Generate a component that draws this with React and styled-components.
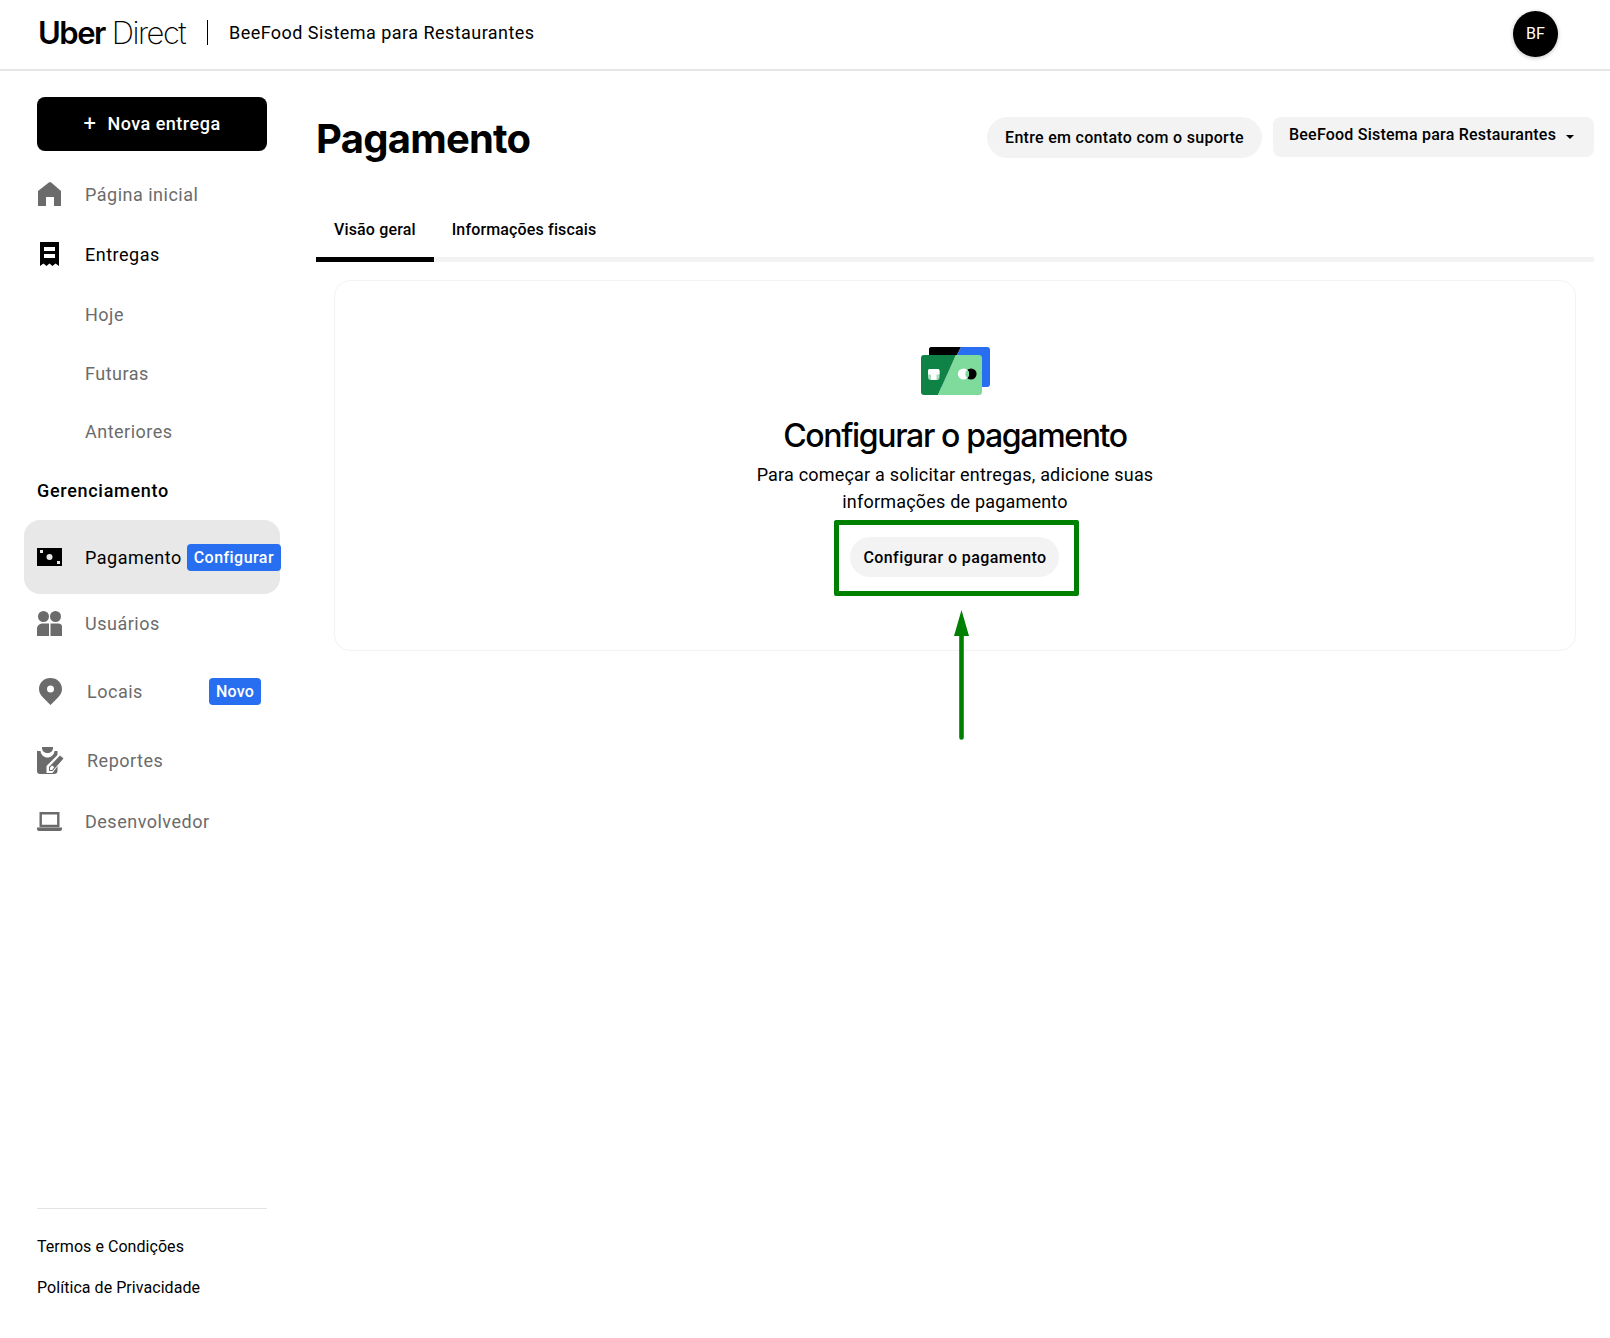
import React from "react";
import styled, { createGlobalStyle } from "styled-components";

const GlobalStyle = createGlobalStyle`
  html, body {
    margin: 0;
    background: #fff;
    color: #000;
    font-family: "Roboto", "Liberation Sans", sans-serif;
  }
  * {
    box-sizing: border-box;
  }
`;

const Page = styled.div`
  width: 1610px;
  height: 1338px;
  display: flex;
  flex-direction: column;
  overflow: hidden;
`;

const Header = styled.header`
  height: 71px;
  flex: none;
  display: flex;
  align-items: center;
  padding: 0 52px 4px 38px;
  border-bottom: 2px solid #e6e6e6;
`;

const Logo = styled.div`
  width: 148px;
  font-family: "Inter", sans-serif;
  font-size: 31px;
  line-height: 34px;
  letter-spacing: -1.5px;
  white-space: nowrap;
`;

const LogoBold = styled.span`
  font-weight: 600;
  margin-right: 7px;
`;

const LogoLight = styled.span`
  font-weight: 200;
`;

const HeaderRule = styled.div`
  width: 1px;
  height: 25px;
  background: #000;
  margin: 0 21px;
`;

const HeaderTitle = styled.div`
  font-size: 18px;
  letter-spacing: 0.45px;
  font-weight: 400;
`;

const Avatar = styled.div`
  margin: 2px 0 0 auto;
  width: 45px;
  height: 46px;
  border-radius: 50%;
  background: #000;
  color: #fff;
  font-size: 16px;
  display: flex;
  align-items: center;
  justify-content: center;
  box-shadow: 0 1px 4px rgba(0, 0, 0, 0.25);
`;

const Body = styled.div`
  flex: 1;
  display: flex;
  min-height: 0;
`;

const Sidebar = styled.aside`
  width: 316px;
  flex: none;
  display: flex;
  flex-direction: column;
  padding: 26px 49px 39px 37px;
`;

const NewButton = styled.button`
  height: 54px;
  flex: none;
  margin-bottom: 13px;
  padding-bottom: 2px;
  border: 0;
  border-radius: 8px;
  background: #000;
  color: #fff;
  font-family: inherit;
  font-size: 18px;
  font-weight: 500;
  letter-spacing: 0.5px;
  display: flex;
  align-items: center;
  justify-content: center;
  gap: 11px;
`;

const Plus = styled.span`
  font-size: 22px;
  font-weight: 400;
  line-height: 1;
`;

const NavItem = styled.div`
  height: ${(p) => p.$h}px;
  flex: none;
  display: flex;
  align-items: center;
  gap: 23px;
  font-size: 18px;
  color: ${(p) => (p.$active ? "#000" : "#6b6b6b")};
  letter-spacing: 0.5px;
`;

const SubItem = styled(NavItem)`
  padding-left: 48px;
`;

const SelectedItem = styled(NavItem)`
  margin: 0 -13px;
  padding-left: 13px;
  background: #e8e8e8;
  border-radius: 16px;
`;

const SectionLabel = styled(NavItem)`
  color: #000;
  font-weight: 500;
  letter-spacing: 0.7px;
`;

const Badge = styled.span`
  height: 27px;
  padding: 0 7px;
  margin-left: ${(p) => p.$ml};
  margin-right: ${(p) => p.$mr};
  flex: none;
  display: flex;
  align-items: center;
  border-radius: 4px;
  background: #276ef1;
  color: #fff;
  font-size: 16px;
  font-weight: 500;
  letter-spacing: ${(p) => p.$ls};
`;

const Footer = styled.div`
  margin-top: auto;
  padding-top: 27px;
  border-top: 1px solid #e2e2e2;
  display: flex;
  flex-direction: column;
  gap: 19px;
  font-size: 16px;
  letter-spacing: 0.05px;
`;

const FooterLink = styled.a`
  line-height: 22px;
  color: #000;
`;

const Main = styled.main`
  flex: 1;
  min-width: 0;
  padding: 46px 16px 0 0;
`;

const TopRow = styled.div`
  display: flex;
  align-items: flex-start;
  gap: 11px;
`;

const PageTitle = styled.h1`
  margin: 0 auto 0 0;
  font-size: 40px;
  line-height: 44px;
  font-weight: 700;
  font-family: "Inter", sans-serif;
  letter-spacing: -0.75px;
`;

const SupportButton = styled.button`
  height: 41px;
  width: 275px;
  border: 0;
  border-radius: 21px;
  background: #f3f3f3;
  color: #000;
  font-family: inherit;
  font-size: 16px;
  font-weight: 500;
  letter-spacing: 0.3px;
`;

const AccountSelect = styled.button`
  width: 321px;
  height: 40px;
  border: 0;
  border-radius: 8px;
  background: #f3f3f3;
  color: #000;
  font-family: inherit;
  font-size: 16px;
  font-weight: 500;
  letter-spacing: 0.22px;
  display: flex;
  align-items: flex-start;
  padding: 8px 0 0 16px;
  gap: 10px;
`;

const Caret = styled.svg`
  width: 8px;
  height: 4px;
  margin-top: 10px;
`;

const Tabs = styled.div`
  margin-top: 56px;
  height: 45px;
  display: flex;
  border-bottom: 5px solid #f3f3f3;
`;

const Tab = styled.div`
  height: 45px;
  padding: 0 18px 16px;
  display: flex;
  align-items: center;
  font-size: 16px;
  font-weight: 500;
  letter-spacing: 0.15px;
  border-bottom: 5px solid ${(p) => (p.$active ? "#000" : "transparent")};
`;

const Card = styled.section`
  position: relative;
  margin: 18px 18px 0;
  height: 371px;
  border: 1px solid #f3f3f3;
  border-radius: 16px;
  padding-top: 66px;
  display: flex;
  flex-direction: column;
  align-items: center;
`;

const CardTitle = styled.h2`
  margin: 19px 0 0;
  font-family: "Inter", sans-serif;
  font-size: 32px;
  line-height: 44px;
  font-weight: 500;
  letter-spacing: -1.35px;
`;

const CardText = styled.p`
  margin: 3px 0 0;
  width: 420px;
  text-align: center;
  font-size: 18px;
  line-height: 27px;
  letter-spacing: 0.2px;
`;

const SetupButton = styled.button`
  margin: 22px 2px 0 0;
  padding-left: 8px;
  width: 209px;
  height: 40px;
  flex: none;
  border: 0;
  border-radius: 20px;
  background: #f3f3f3;
  color: #000;
  font-family: inherit;
  font-size: 16px;
  font-weight: 500;
  letter-spacing: 0.43px;
`;

const Highlight = styled.div`
  position: absolute;
  left: 499px;
  top: 239px;
  width: 245px;
  height: 76px;
  border: 5px solid #008000;
  border-radius: 2px;
  pointer-events: none;
`;

const ArrowMark = styled.svg`
  position: absolute;
  left: 618px;
  top: 329px;
  width: 17px;
  height: 130px;
`;

const HomeIcon = () => (
  <svg width="25" height="24" viewBox="0 0 25 24" fill="#6b6b6b">
    <path d="M13 0 L14.5 .8 L24 9 V24 H17 V15 H9 V24 H1 V9 L11.5 .8 Z" />
  </svg>
);

const ReceiptIcon = () => (
  <svg width="25" height="24" viewBox="0 0 25 24">
    <path
      fill="#000"
      d="M3 0 H22 V24 L18.5 21.5 L15.5 24 L12.5 21.5 L9.5 24 L6.5 21.5 L3 24 Z"
    />
    <path fill="#fff" d="M7 5 H18 V9 H7 Z M7 12 H18 V16 H7 Z" />
  </svg>
);

const MoneyIcon = () => (
  <svg width="25" height="24" viewBox="0 0 25 24">
    <path fill="#000" d="M0 3 H25 V21 H0 Z" />
    <circle cx="12.5" cy="12" r="3" fill="#e8e8e8" />
    <path fill="#e8e8e8" d="M3 5 H6 V8 H3 Z M20 16 H23 V19 H20 Z" />
  </svg>
);

const UsersIcon = () => (
  <svg width="25" height="25" viewBox="0 0 25 25" fill="#6b6b6b">
    <circle cx="6.5" cy="5.5" r="5.5" />
    <circle cx="18.5" cy="5.5" r="5.5" />
    <path d="M0 25 V18 C0 14 3 12.5 6 12.5 H12 V25 Z" />
    <path d="M13.5 25 V12.5 H21 C24 12.5 25 14 25 16 V25 Z" />
  </svg>
);

const PinIcon = () => (
  <svg width="27" height="27" viewBox="0 0 27 27" fill="#6b6b6b">
    <path
      fillRule="evenodd"
      d="M13.5 0 C20 0 25 4.8 25 11 C25 15 23 17.5 20.5 20 L13.5 27 L6.5 20 C4 17.5 2 15 2 11 C2 4.8 7 0 13.5 0 Z M13.5 7.5 A3.5 3.5 0 1 0 13.5 14.5 A3.5 3.5 0 1 0 13.5 7.5 Z"
    />
  </svg>
);

const ReportIcon = () => (
  <svg width="27" height="27" viewBox="0 0 27 27">
    <path
      fill="#6b6b6b"
      d="M0 4 H3.5 C4 8 7 10.5 10.5 10.5 C14 10.5 17 8 17.5 4 H20.5 V24 C20.5 26 19 27 17 27 H3 C1 27 0 26 0 24 Z"
    />
    <path fill="#6b6b6b" d="M5 0 H16 V1 C16 4 13.5 6 10.5 6 C7.5 6 5 4 5 1 Z" />
    <path fill="#fff" d="M9.5 26 V19 L22.5 6 L27 10.5 L15.5 26 Z" />
    <path fill="#6b6b6b" d="M12 24 V20 L23 8.5 L26.5 11.5 L15.5 24 Z" />
    <path fill="#fff" d="M13 23 V20.5 L15.2 18.4 L17.2 20.2 L15 23 Z" />
  </svg>
);

const LaptopIcon = () => (
  <svg width="25" height="19" viewBox="0 0 25 19" fill="none">
    <path d="M3.7 1.2 H21.3 V14 H3.7 Z" stroke="#6b6b6b" strokeWidth="2.4" />
    <path d="M0 15.5 H25 V17 C25 18 24 19 23 19 H2 C1 19 0 18 0 17 Z" fill="#6b6b6b" />
  </svg>
);

const WalletArt = () => (
  <svg width="69" height="48" viewBox="0 0 69 48">
    <path fill="#000" d="M8 2 C8 1 9 0 10 0 H40 L20 40 H8 Z" />
    <path fill="#276ef1" d="M40 0 H66 C68 0 69 1 69 3 V37 C69 39 68 40 66 40 H20 Z" />
    <path fill="#0e8345" d="M3 8 H34.5 L17 48 H3 C1 48 0 47 0 45 V11 C0 9 1 8 3 8 Z" />
    <path fill="#7fdb9c" d="M34.5 8 H58 C60 8 61 9 61 11 V45 C61 47 60 48 58 48 H17 Z" />
    <path fill="#a9dcbc" d="M7 24 C7 22.5 8 22 9 22 H16.5 C17.5 22 18.5 22.5 18.5 24 V30 C18.5 32 17.5 33 16 33 H9.5 C8 33 7 32 7 30 Z" />
    <path fill="#fff" d="M7 24 C7 22.5 8 22 9 22 H16.5 C17.5 22 18.5 22.5 18.5 24 V27.5 H15.5 V33 H10 V27.5 H7 Z" />
    <circle cx="50" cy="27" r="5.6" fill="#000" />
    <circle cx="42.5" cy="27" r="5.6" fill="#fff" />
    <path fill="#7fdb9c" d="M46.2 22.8 A5.6 5.6 0 0 1 46.2 31.2 A5.6 5.6 0 0 1 46.2 22.8 Z" />
  </svg>
);

const App = () => (
  <Page>
    <GlobalStyle />
    <Header>
      <Logo>
        <LogoBold>Uber</LogoBold>
        <LogoLight>Direct</LogoLight>
      </Logo>
      <HeaderRule />
      <HeaderTitle>BeeFood Sistema para Restaurantes</HeaderTitle>
      <Avatar>BF</Avatar>
    </Header>
    <Body>
      <Sidebar>
        <NewButton>
          <Plus>+</Plus>
          Nova entrega
        </NewButton>
        <NavItem $h={60}>
          <HomeIcon />
          Página inicial
        </NavItem>
        <NavItem $h={60} $active>
          <ReceiptIcon />
          Entregas
        </NavItem>
        <SubItem $h={60}>Hoje</SubItem>
        <SubItem $h={58}>Futuras</SubItem>
        <SubItem $h={58}>Anteriores</SubItem>
        <SectionLabel $h={60}>Gerenciamento</SectionLabel>
        <SelectedItem $h={74} $active>
          <MoneyIcon />
          <span>Pagamento</span>
          <Badge $ml="-18px" $mr="-1px" $ls="0.45px">
            Configurar
          </Badge>
        </SelectedItem>
        <NavItem $h={58}>
          <UsersIcon />
          Usuários
        </NavItem>
        <NavItem $h={78}>
          <PinIcon />
          Locais
          <Badge $ml="auto" $mr="6px" $ls="0.2px">
            Novo
          </Badge>
        </NavItem>
        <NavItem $h={60}>
          <ReportIcon />
          Reportes
        </NavItem>
        <NavItem $h={62}>
          <LaptopIcon />
          Desenvolvedor
        </NavItem>
        <Footer>
          <FooterLink>Termos e Condições</FooterLink>
          <FooterLink>Política de Privacidade</FooterLink>
        </Footer>
      </Sidebar>
      <Main>
        <TopRow>
          <PageTitle>Pagamento</PageTitle>
          <SupportButton>Entre em contato com o suporte</SupportButton>
          <AccountSelect>
            BeeFood Sistema para Restaurantes
            <Caret viewBox="0 0 8 4">
              <path d="M0 0 H8 L4 4 Z" fill="#000" />
            </Caret>
          </AccountSelect>
        </TopRow>
        <Tabs>
          <Tab $active>Visão geral</Tab>
          <Tab>Informações fiscais</Tab>
        </Tabs>
        <Card>
          <WalletArt />
          <CardTitle>Configurar o pagamento</CardTitle>
          <CardText>
            Para começar a solicitar entregas, adicione suas informações de
            pagamento
          </CardText>
          <SetupButton>Configurar o pagamento</SetupButton>
          <Highlight />
          <ArrowMark viewBox="0 0 17 130">
            <path d="M8.5 0 L16 26 H10.8 V127.5 A2.2 2.2 0 0 1 6.2 127.5 V26 H1 Z" fill="#008000" />
          </ArrowMark>
        </Card>
      </Main>
    </Body>
  </Page>
);

export default App;
